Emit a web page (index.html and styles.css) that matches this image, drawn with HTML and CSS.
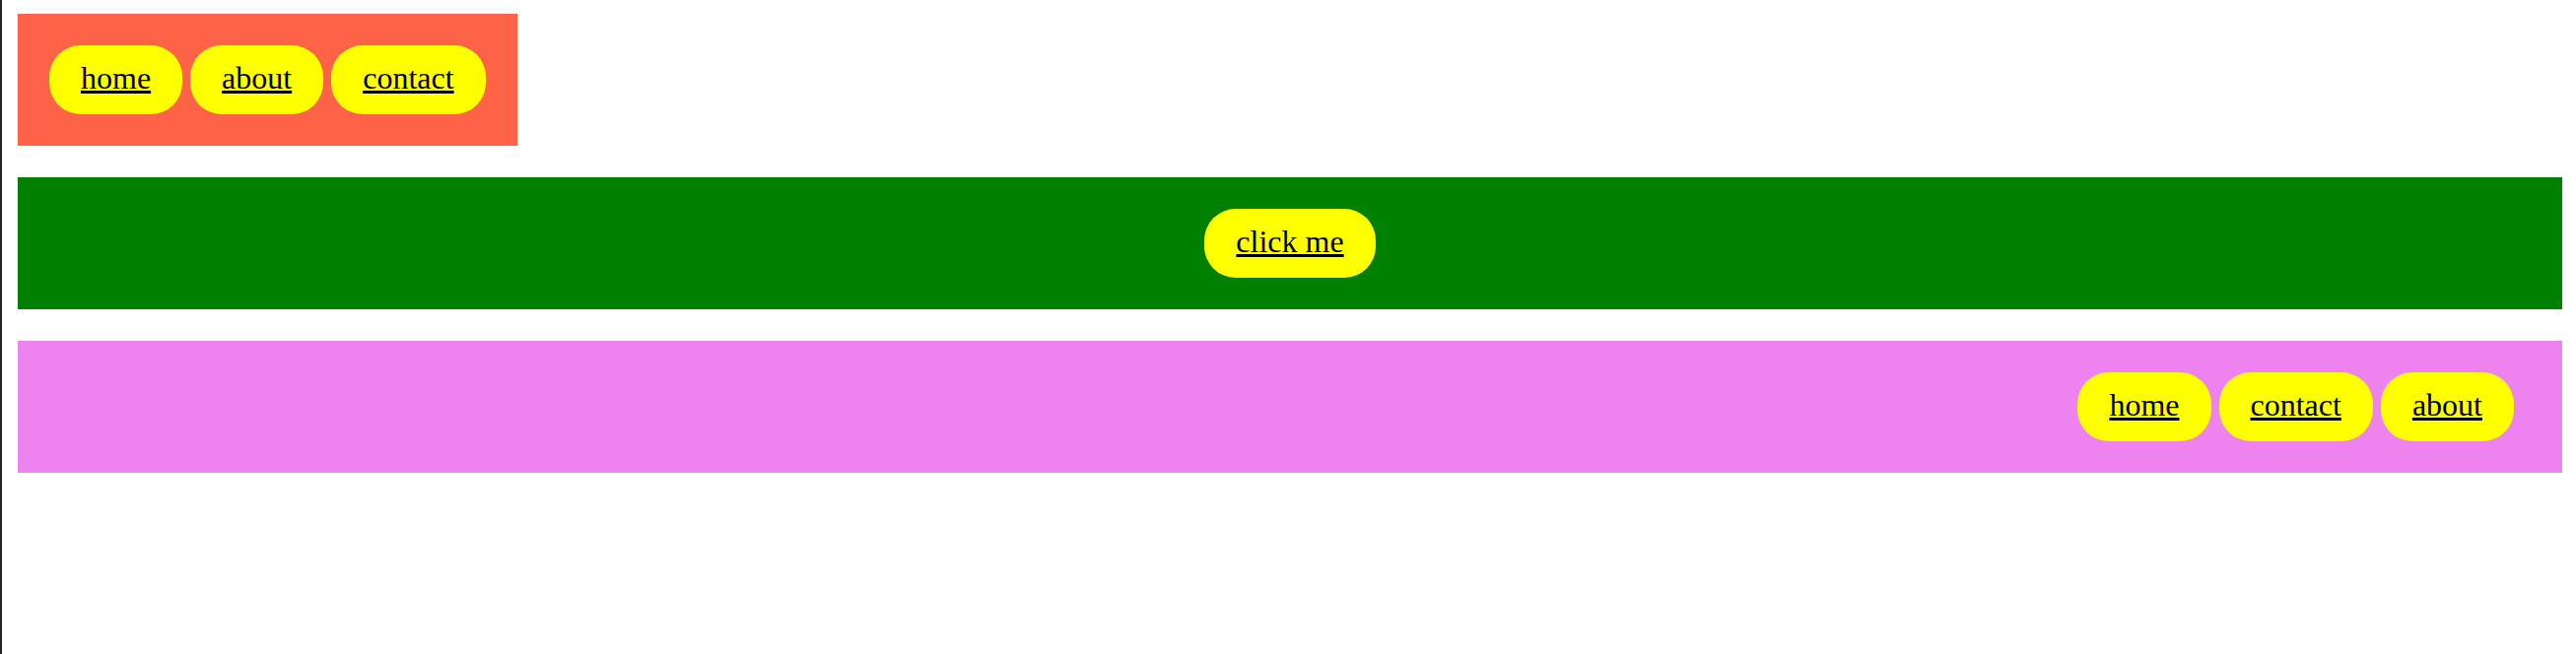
FILE: index.html
```html
<!DOCTYPE html>
<html>
<head>
<meta charset="utf-8">
<link rel="stylesheet" href="styles.css">
</head>
<body>
<div class="page">
  <nav class="bar bar-red">
    <a class="pill" href="#">home</a>
    <a class="pill" href="#">about</a>
    <a class="pill" href="#">contact</a>
  </nav>
  <div class="bar bar-green">
    <a class="pill" href="#">click me</a>
  </div>
  <nav class="bar bar-pink">
    <a class="pill" href="#">home</a>
    <a class="pill" href="#">contact</a>
    <a class="pill" href="#">about</a>
  </nav>
</div>
</body>
</html>
```

FILE: styles.css
```css
html {
  border-left: 2px solid #222222;
  min-height: 100%;
  box-sizing: border-box;
}
html, body { height: 100%; }
body {
  margin: 0;
  font-family: "Liberation Serif", "Times New Roman", serif;
  font-size: 32px;
  background: #ffffff;
}
.page {
  display: flex;
  flex-direction: column;
  gap: 32px;
  padding: 14px 14px 0 16px;
}
.bar {
  display: flex;
  gap: 8px;
  padding: 32px;
}
.bar-red {
  background: #ff6347;
  align-self: flex-start;
}
.bar-green {
  background: #008000;
  justify-content: center;
}
.bar-pink {
  background: #ee82ee;
  justify-content: flex-end;
  padding-right: 49px;
}
.pill {
  display: block;
  background: #ffff00;
  color: #000000;
  text-decoration: underline;
  padding: 15px 32px 19px;
  border-radius: 32px;
  line-height: 36px;
}
```
